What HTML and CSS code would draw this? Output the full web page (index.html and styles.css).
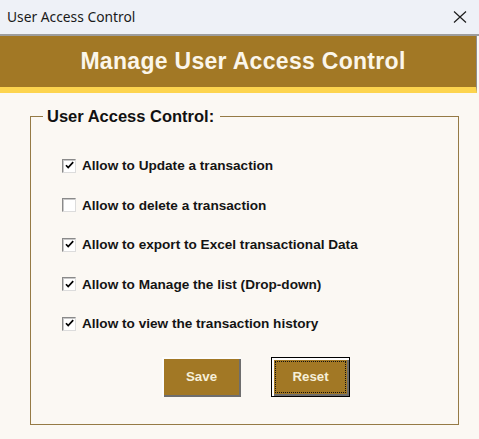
FILE: index.html
```html
<!DOCTYPE html>
<html>
<head>
<meta charset="utf-8">
<link rel="stylesheet" href="styles.css">
</head>
<body>
<div class="titlebar">
  <span class="title">User Access Control</span>
  <svg class="close" width="14" height="14" viewBox="0 0 14 14"><path d="M1 1.5 L13 12.5 M13 1.5 L1 12.5" stroke="#1b1b1b" stroke-width="1.15" fill="none"/></svg>
</div>
<div class="header">
  <h1 class="heading">Manage User Access Control</h1>
</div>
<div class="content">
  <fieldset class="group">
    <legend class="legend">User Access Control:</legend>
    <div class="options">
      <label class="option"><span class="box checked"><svg width="11" height="11" viewBox="0 0 11 11"><path d="M2 5.2 L4.2 7.6 L9.2 2.2" stroke="#000" stroke-width="1.7" fill="none"/></svg></span><span class="label">Allow to Update a transaction</span></label>
      <label class="option"><span class="box"></span><span class="label">Allow to delete a transaction</span></label>
      <label class="option"><span class="box checked"><svg width="11" height="11" viewBox="0 0 11 11"><path d="M2 5.2 L4.2 7.6 L9.2 2.2" stroke="#000" stroke-width="1.7" fill="none"/></svg></span><span class="label">Allow to export to Excel transactional Data</span></label>
      <label class="option"><span class="box checked"><svg width="11" height="11" viewBox="0 0 11 11"><path d="M2 5.2 L4.2 7.6 L9.2 2.2" stroke="#000" stroke-width="1.7" fill="none"/></svg></span><span class="label">Allow to Manage the list (Drop-down)</span></label>
      <label class="option"><span class="box checked"><svg width="11" height="11" viewBox="0 0 11 11"><path d="M2 5.2 L4.2 7.6 L9.2 2.2" stroke="#000" stroke-width="1.7" fill="none"/></svg></span><span class="label">Allow to view the transaction history</span></label>
    </div>
    <div class="buttons">
      <button class="btn">Save</button>
      <button class="btn focused">Reset</button>
    </div>
  </fieldset>
</div>
</body>
</html>
```
FILE: styles.css
```css
html, body {
  margin: 0;
  padding: 0;
}
body {
  width: 479px;
  height: 439px;
  background: #fbf8f3;
  font-family: "Liberation Sans", Arial, sans-serif;
  overflow: hidden;
}
.titlebar {
  height: 34px;
  background: #eef1f7;
  border-bottom: 2px solid #9d9d9d;
  display: flex;
  align-items: center;
  justify-content: space-between;
  padding: 0 12px 0 7px;
}
.title {
  font-family: "Noto Sans", "Open Sans", sans-serif;
  font-size: 13.8px;
  color: #1a1a1a;
  margin-top: -2px;
}
.close {
  display: block;
  margin-top: -1px;
}
.header {
  height: 51px;
  background: #a27825;
  border-bottom: 6px solid #fdd44e;
  border-right: 1px solid #8e8e8e;
  margin-right: 2px;
  display: flex;
  align-items: center;
  justify-content: center;
  padding-left: 10px;
}
.heading {
  margin: 0;
  font-size: 23px;
  letter-spacing: 0.3px;
  font-weight: bold;
  color: #fbf6ea;
}
.content {
  padding: 14px 0 0 30px;
}
.group {
  margin: 0;
  width: 415px;
  border: 1px solid #957a45;
  padding: 0 0 27px 12px;
}
.legend {
  font-size: 16.5px;
  line-height: 19px;
  font-weight: bold;
  color: #111;
  padding: 0 6px 0 4px;
}
.options {
  display: flex;
  flex-direction: column;
  margin-top: 20px;
  padding-left: 19px;
}
.option {
  height: 39.5px;
  display: flex;
  align-items: center;
  gap: 6px;
}
.box {
  width: 12px;
  height: 12px;
  background: #fff;
  border: 1px solid;
  border-color: #8a8a8a #dcdcdc #dcdcdc #8a8a8a;
  box-shadow: inset 1px 1px 0 #c8c8c8;
  display: flex;
  align-items: center;
  justify-content: center;
}
.box svg {
  display: block;
}
.label {
  font-size: 13.6px;
  font-weight: bold;
  color: #141414;
}
.buttons {
  display: flex;
  gap: 30px;
  margin-top: 13px;
  padding-left: 119px;
}
.btn {
  position: relative;
  width: 79px;
  height: 40px;
  margin: 0;
  padding: 0;
  border: none;
  background: #a27825;
  color: #f6efd8;
  font-family: "Liberation Sans", Arial, sans-serif;
  font-weight: bold;
  font-size: 13.3px;
  box-shadow: inset 2px 2px 0 #fdfdfd, inset -2px -2px 0 #6e6e6e;
}
.btn.focused {
  border: 1px solid #000;
  box-shadow: inset 2px 2px 0 #fdfdfd, inset -2px -2px 0 #6e6e6e;
}
.btn.focused::after {
  content: "";
  position: absolute;
  inset: 3px;
  border: 1px dotted #111;
}
```
